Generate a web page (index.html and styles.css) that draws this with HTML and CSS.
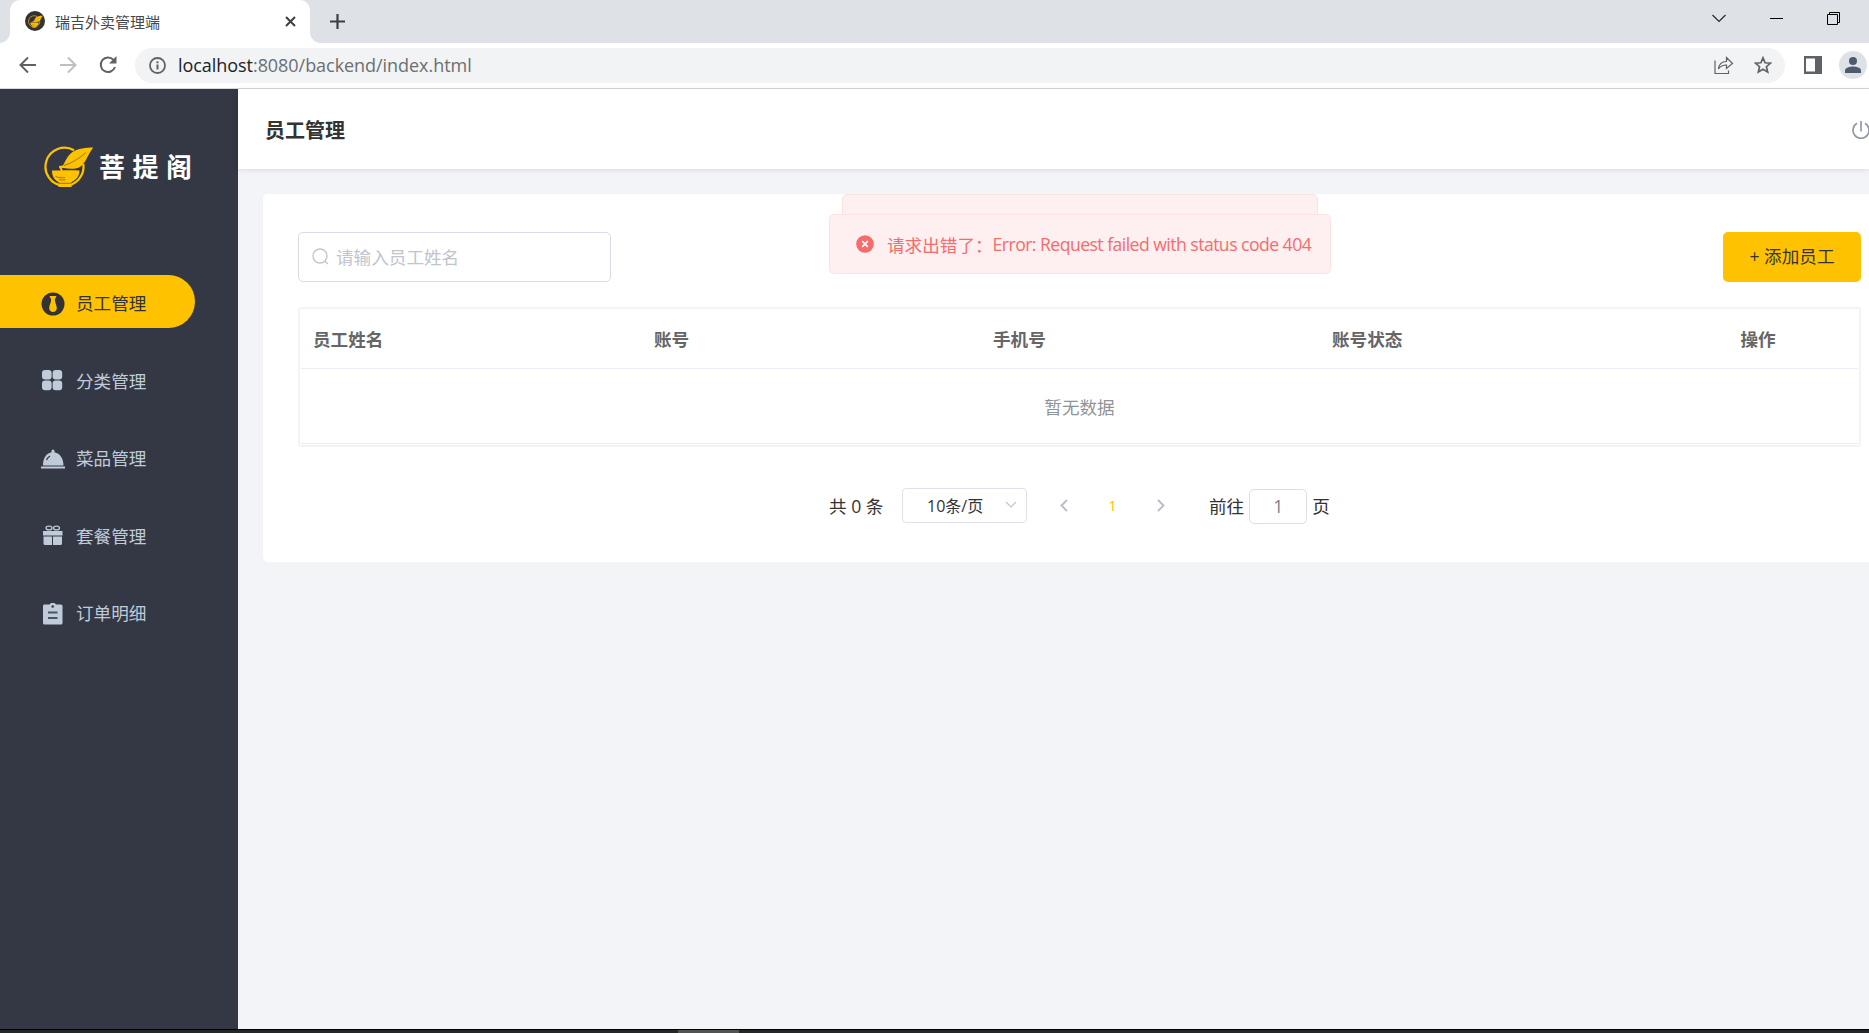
FILE: index.html
```html
<!DOCTYPE html>
<html lang="zh-CN">
<head>
    <meta charset="UTF-8">
    <title>瑞吉外卖管理端</title>
    <link rel="stylesheet" href="styles.css">
</head>
<body>
    <svg class="defs">
        <symbol id="bowl" viewBox="0 0 50 42">
            <path d="M30 4.300A19 19 0 1 0 39.300 18" fill="none" stroke="#ffc200" stroke-width="2.200"/>
            <path d="M49.300 1.500C42 1.500 34 2.500 28.500 6c-5 3.500-7 9-9.500 13.500l-4 .5.500 2h4c5 1.200 12 1.200 16-.8 6-3.200 7.500-11.700 13.800-19.700z" fill="#ffc200"/>
            <path d="M20 19.500C28 17 36 12 42 6.500" fill="none" stroke="#8b6f1a" stroke-width=".9"/>
            <path d="M8 24.500h9.500c5-.6 11-.3 18 0 0 6-3.500 9.500-8 11.500v5H14.500v-5C10.500 34 8 30.500 8 24.500z" fill="#ffc200"/>
            <path d="M16 20.500l2 4.500" stroke="#ffc200" stroke-width="2"/>
            <path d="M11.500 30.500c3 1.200 6 1.500 9.500 1M15 33.500c2.500.6 4.500.6 6.500 0M14.500 37.300h13" fill="none" stroke="#8b6f1a" stroke-width=".9"/>
        </symbol>
    </svg>

    <div class="tabs">
        <div class="tab">
            <span class="favicon"><svg width="15" height="13"><use href="#bowl"/></svg></span>
            <span class="tab-title">瑞吉外卖管理端</span>
            <svg class="tab-close" width="11" height="11" viewBox="0 0 11 11"><path d="M1 1l9 9M10 1l-9 9" stroke="#3c4043" stroke-width="2"/></svg>
        </div>
        <svg class="tab-new" width="15" height="15" viewBox="0 0 15 15"><path d="M7.500 0v15M0 7.500h15" stroke="#3c4043" stroke-width="2.200"/></svg>
        <div class="window-btns">
            <svg width="14" height="9" viewBox="0 0 14 9"><path d="M.5 1L7 7.500 13.500 1" fill="none" stroke="#222" stroke-width="1.100"/></svg>
            <svg width="13" height="13" viewBox="0 0 13 13"><path d="M0 6.500h13" stroke="#000"/></svg>
            <svg width="13" height="13" viewBox="0 0 13 13"><path d="M.5 2.500h10v10H.5zM2.500 2.500v-2h10v10h-2" fill="none" stroke="#000"/></svg>
        </div>
    </div>

    <div class="toolbar">
        <svg class="nav-btn" width="18" height="18" viewBox="0 0 18 18"><path d="M17 9H2M9 1.500L1.500 9 9 16.500" fill="none" stroke="#5f6368" stroke-width="2"/></svg>
        <svg class="nav-btn" width="18" height="18" viewBox="0 0 18 18"><path d="M1 9h15M9 1.500L16.500 9 9 16.500" fill="none" stroke="#bdbfc1" stroke-width="2"/></svg>
        <svg class="nav-btn" width="18" height="18" viewBox="0 0 18 18"><path d="M14.500 3.800A7.300 7.300 0 1 0 16 11" fill="none" stroke="#5f6368" stroke-width="2"/><path d="M17.500 0v7.500H10z" fill="#5f6368"/></svg>
        <div class="address">
            <svg width="17" height="17" viewBox="0 0 17 17"><circle cx="8.500" cy="8.500" r="7.500" fill="none" stroke="#5f6368" stroke-width="1.800"/><path d="M8.500 7.500v5M8.500 4.300v2" stroke="#5f6368" stroke-width="2"/></svg>
            <span class="url"><b>localhost</b>:8080/backend/index.html</span>
            <svg class="share" width="20" height="19" viewBox="0 0 20 19"><path d="M1 4.500V17.500H14.500V14.500M4.500 13C5 8 8.500 5.500 12.500 5.500V1.500L18.500 7.500 12.500 12.500V9C9 9 6.500 10 4.500 13z" fill="none" stroke="#5f6368" stroke-width="1.200"/></svg>
            <svg width="18" height="18" viewBox="0 0 18 18"><path d="M9 1.800l2.100 5 5.400.4-4.100 3.500 1.300 5.300L9 13.200 4.300 16l1.300-5.300L1.500 7.200l5.400-.4z" fill="none" stroke="#5f6368" stroke-width="1.700"/></svg>
        </div>
        <svg class="panel-icon" width="18" height="18" viewBox="0 0 18 18"><path d="M0 0h18v18H0zM2 2.500v13h9v-13z" fill="#5f6368" fill-rule="evenodd"/></svg>
        <span class="profile"><svg width="16" height="16" viewBox="0 0 16 16"><circle cx="8" cy="4" r="4" fill="#4e5a6e"/><path d="M0 16v-2.500C0 10.500 5 9.500 8 9.500s8 1 8 4V16z" fill="#4e5a6e"/></svg></span>
    </div>

    <div class="app">
        <div class="sidebar">
            <div class="logo">
                <svg width="50" height="42"><use href="#bowl"/></svg>
                <span>菩提阁</span>
            </div>
            <ul class="menu">
                <li class="active">
                    <svg width="24" height="24" viewBox="0 0 24 24"><circle cx="12" cy="12" r="11.500" fill="#333"/><path d="M8.500 4h7l-1.700 3.500c0 3 2.200 6 2 9-.3 2-1.800 3.500-3.800 3.500s-3.500-1.500-3.800-3.500c-.2-3 2-6 2-9z" fill="#ffc200"/></svg>
                    <span>员工管理</span>
                </li>
                <li>
                    <svg width="24" height="24" viewBox="0 0 24 24"><g fill="#bfcbd9"><rect x="1" y="1" width="9.600" height="9.600" rx="3"/><rect x="11.600" y="1" width="9.600" height="9.600" rx="3"/><rect x="1" y="11.600" width="9.600" height="9.600" rx="3"/><rect x="11.600" y="11.600" width="9.600" height="9.600" rx="3"/></g></svg>
                    <span>分类管理</span>
                </li>
                <li>
                    <svg width="24" height="24" viewBox="0 0 24 24"><path d="M0 19.500h24v2H0zM2 18.500C2 11.500 5 6.500 10.500 5.300V4a1.500 1.500 0 0 1 3 0v1.300C19 6.500 22.500 11.500 22.500 18.500z" fill="#bfcbd9"/><path d="M5.500 13c.6-1.800 1.800-3 3.500-4" fill="none" stroke="#343744" stroke-width="1.200"/></svg>
                    <span>菜品管理</span>
                </li>
                <li>
                    <svg width="24" height="24" viewBox="0 0 24 24"><g fill="#bfcbd9"><path d="M2 7h19.500v4.500H2zM2.500 12.500h8.500V21h-7q-1.500 0-1.500-1.500zM12 12.500h9v7q0 1.500-1.500 1.500H12z"/></g><ellipse cx="8" cy="4" rx="3" ry="1.900" fill="none" stroke="#bfcbd9" stroke-width="1.300"/><ellipse cx="15.500" cy="4" rx="3" ry="1.900" fill="none" stroke="#bfcbd9" stroke-width="1.300"/></svg>
                    <span>套餐管理</span>
                </li>
                <li>
                    <svg width="24" height="24" viewBox="0 0 24 24"><path d="M3 2.500h5.500l1.500-1.500h3.500L15 2.500h5q1.500 0 1.500 1.500v17q0 1.500-1.500 1.500H3.500Q2 22.500 2 21V4q0-1.500 1-1.500z" fill="#bfcbd9"/><circle cx="11.700" cy="4.500" r="1.300" fill="#343744"/><path d="M7 10.500h9.500M7 16h9.500" stroke="#4b5466" stroke-width="1.800"/></svg>
                    <span>订单明细</span>
                </li>
            </ul>
        </div>

        <div class="main">
            <div class="header">
                <h1>员工管理</h1>
                <svg width="18" height="19" viewBox="0 0 18 19"><path d="M9 0v10.500M5 2.300a8 8 0 1 0 8 0" fill="none" stroke="#9399a5" stroke-width="1.700"/></svg>
            </div>
            <div class="card">
                <div class="table-bar">
                    <div class="search">
                        <svg width="17" height="17" viewBox="0 0 17 17"><circle cx="8" cy="8" r="7" fill="none" stroke="#c0c4cc" stroke-width="1.300"/><path d="M12.800 13l3.200 3" stroke="#c0c4cc" stroke-width="1.300"/></svg>
                        <span>请输入员工姓名</span>
                    </div>
                    <button class="add-btn">+ 添加员工</button>
                </div>
                <div class="table">
                    <div class="table-head">
                        <span>员工姓名</span>
                        <span>账号</span>
                        <span>手机号</span>
                        <span>账号状态</span>
                        <span class="center">操作</span>
                    </div>
                    <div class="table-empty">暂无数据</div>
                </div>
                <div class="pagination">
                    <span class="total">共 0 条</span>
                    <div class="page-size">
                        <span>10条/页</span>
                        <svg width="12" height="8" viewBox="0 0 12 8"><path d="M1 1l5 5 5-5" fill="none" stroke="#c0c4cc" stroke-width="1.200"/></svg>
                    </div>
                    <svg class="prev" width="8" height="13" viewBox="0 0 8 13"><path d="M7 1L1.500 6.500 7 12" fill="none" stroke="#b8bdc9" stroke-width="1.900"/></svg>
                    <span class="current">1</span>
                    <svg class="next" width="8" height="13" viewBox="0 0 8 13"><path d="M1 1l5.500 5.500L1 12" fill="none" stroke="#b8bdc9" stroke-width="1.900"/></svg>
                    <span>前往</span>
                    <span class="jump-input">1</span>
                    <span>页</span>
                </div>
            </div>
        </div>
    </div>

    <div class="taskbar"><div class="taskbar-item"></div></div>

    <div class="message message-back"></div>
    <div class="message message-front">
        <svg width="18" height="18" viewBox="0 0 18 18"><circle cx="9" cy="9" r="8.800" fill="#f56c6c"/><path d="M6.200 6.200l5.600 5.600M11.800 6.200l-5.600 5.600" stroke="#fff" stroke-width="1.700"/></svg>
        <span>请求出错了：</span><span class="message-en">Error: Request failed with status code 404</span>
    </div>
</body>
</html>
```
FILE: styles.css
```css
* {
    box-sizing: border-box;
}

body {
    margin: 0;
    height: 1033px;
    display: flex;
    flex-direction: column;
    overflow: hidden;
    font-family: "Open Sans", "Noto Sans CJK SC", sans-serif;
    font-size: 17.6px;
    color: #333;
    background-color: #fff;
}

svg {
    display: block;
    flex-shrink: 0;
}

.defs {
    position: absolute;
    width: 0;
    height: 0;
}

/* browser window */
.tabs {
    height: 43px;
    flex-shrink: 0;
    display: flex;
    align-items: center;
    padding-left: 10px;
    background-color: #dee1e6;
}

.tab {
    position: relative;
    width: 300px;
    height: 43px;
    padding: 0 14px 1px 15px;
    display: flex;
    align-items: center;
    border-radius: 10px 10px 0 0;
    background-color: #fff;
}

.tab::before,
.tab::after {
    content: "";
    position: absolute;
    bottom: 0;
    width: 10px;
    height: 10px;
}

.tab::before {
    left: -10px;
    background: radial-gradient(circle at 0 0, #dee1e6 9.5px, #fff 10px);
}

.tab::after {
    right: -10px;
    background: radial-gradient(circle at 100% 0, #dee1e6 9.5px, #fff 10px);
}

.favicon {
    width: 20px;
    height: 20px;
    display: flex;
    align-items: center;
    justify-content: center;
    border-radius: 50%;
    background-color: #333;
}

.tab-title {
    margin: 2px 0 0 10px;
    font-size: 15px;
    line-height: 20px;
    color: #45474a;
}

.tab-close {
    margin-left: auto;
}

.tab-new {
    margin-left: 20px;
}

.window-btns {
    margin-left: auto;
    padding: 0 29px 6px 0;
    display: flex;
    align-items: center;
    gap: 44px;
}

.toolbar {
    height: 46px;
    flex-shrink: 0;
    display: flex;
    align-items: center;
    padding: 0 2px 1px 19px;
    border-bottom: 1px solid #d5d7da;
}

.nav-btn {
    margin-right: 22px;
}

.address {
    width: 1650px;
    height: 35px;
    margin-left: -4px;
    padding: 0 13px 0 14px;
    display: flex;
    align-items: center;
    border-radius: 18px;
    background-color: #f1f3f4;
}

.url {
    margin-left: 12px;
    font-size: 18px;
    line-height: 34px;
    letter-spacing: -0.05px;
    color: #6b6f73;
}

.url b {
    font-weight: normal;
    color: #202124;
}

.share {
    margin: 0 20px 0 auto;
}

.panel-icon {
    margin-left: 19px;
}

.profile {
    width: 28px;
    height: 28px;
    margin-left: 17px;
    flex-shrink: 0;
    display: flex;
    align-items: center;
    justify-content: center;
    border-radius: 50%;
    background-color: #dee1e6;
}

/* page */
.app {
    flex: 1;
    display: flex;
    min-height: 0;
}

.sidebar {
    width: 238px;
    flex-shrink: 0;
    background-color: #343744;
}

.logo {
    height: 186px;
    padding: 57px 0 0 44px;
    display: flex;
    align-items: flex-start;
    color: #fff;
    font-size: 26px;
    font-weight: bold;
    line-height: 42px;
}

.logo span {
    margin-left: 5px;
    letter-spacing: 7.5px;
    white-space: nowrap;
}

.menu {
    margin: 0;
    padding: 0;
    list-style: none;
    display: flex;
    flex-direction: column;
    gap: 24.6px;
}

.menu li {
    width: 195px;
    height: 53px;
    padding: 4px 0 0 41px;
    display: flex;
    align-items: center;
    gap: 11px;
    border-radius: 0 27px 27px 0;
    color: #bfcbd9;
}

.menu span {
    margin-top: -2px;
}

.menu .active {
    background-color: #ffc200;
    color: #333;
}

.main {
    flex: 1;
    min-width: 0;
    background-color: #f3f4f8;
}

.header {
    height: 80px;
    padding: 2px 0 0 27px;
    display: flex;
    align-items: center;
    justify-content: space-between;
    background-color: #fff;
    box-shadow: 0 1px 5px rgba(0, 0, 0, 0.1);
}

.header svg {
    margin-right: -1px;
}

h1 {
    margin: 2px 0 0;
    font-size: 20px;
    line-height: 30px;
}

.card {
    height: 368px;
    margin: 25px 0 0 25px;
    padding: 38px 8px 0 35px;
    border-radius: 5px 0 0 5px;
    background-color: #fff;
}

.table-bar {
    display: flex;
    justify-content: space-between;
    margin-bottom: 25px;
}

.search {
    width: 313px;
    height: 50px;
    padding: 0 0 2px 13px;
    display: flex;
    align-items: center;
    gap: 7px;
    border: 1px solid #d8dce5;
    border-radius: 5px;
    color: #c0c4cc;
}

.add-btn {
    width: 138px;
    height: 50px;
    padding: 0 0 4px;
    border: none;
    border-radius: 5px;
    background-color: #ffc200;
    color: #333;
    font: inherit;
}

.table {
    height: 140px;
    padding: 0 1px;
    border: 2px solid #f3f4f9;
    border-radius: 3px;
}

.table-head {
    height: 60px;
    display: grid;
    grid-template-columns: 341px 339px 339px 1fr 200px;
    align-items: center;
    padding: 0 0 1px 12px;
    border-bottom: 1px solid #ebeef5;
    color: #666;
    font-weight: bold;
}

.center {
    text-align: center;
}

.table-empty {
    height: 75px;
    line-height: 76px;
    text-align: center;
    border-bottom: 1px solid #ebeef5;
    color: #909399;
}

.pagination {
    height: 36px;
    margin-top: 40px;
    padding-left: 531px;
    display: flex;
    align-items: center;
}

.total {
    width: 73px;
    white-space: nowrap;
}

.page-size {
    width: 125px;
    height: 35px;
    padding: 0 9px 1px 24px;
    display: flex;
    align-items: center;
    justify-content: space-between;
    border: 1px solid #dfe2e8;
    border-radius: 4px;
    font-size: 16px;
}

.prev {
    margin-left: 33px;
}

.current {
    width: 89px;
    text-align: center;
    font-size: 15px;
    color: #ffc200;
}

.next {
    margin-right: 44px;
}

.jump-input {
    width: 58px;
    height: 35px;
    margin: 2px 5px 0;
    line-height: 32px;
    text-align: center;
    border: 1px solid #dcdfe6;
    border-radius: 5px;
    color: #7c8087;
}

.taskbar {
    height: 4px;
    flex-shrink: 0;
    padding-left: 678px;
    border-top: 1px solid #000;
    background-color: #232725;
}

.taskbar-item {
    width: 61px;
    height: 3px;
    background-color: #50544f;
}

/* error messages on top of the page */
.message {
    position: absolute;
    height: 60px;
    border: 1px solid #fde2e2;
    border-radius: 5px;
    background-color: #fef0f0;
    color: #f56c6c;
}

.message-back {
    top: 194px;
    left: 842px;
    width: 476px;
}

.message-front {
    top: 214px;
    left: 829px;
    width: 502px;
    padding-left: 26px;
    display: flex;
    align-items: center;
    white-space: nowrap;
}

.message-front svg {
    margin-right: 13px;
}

.message-en {
    letter-spacing: -0.53px;
}
```
